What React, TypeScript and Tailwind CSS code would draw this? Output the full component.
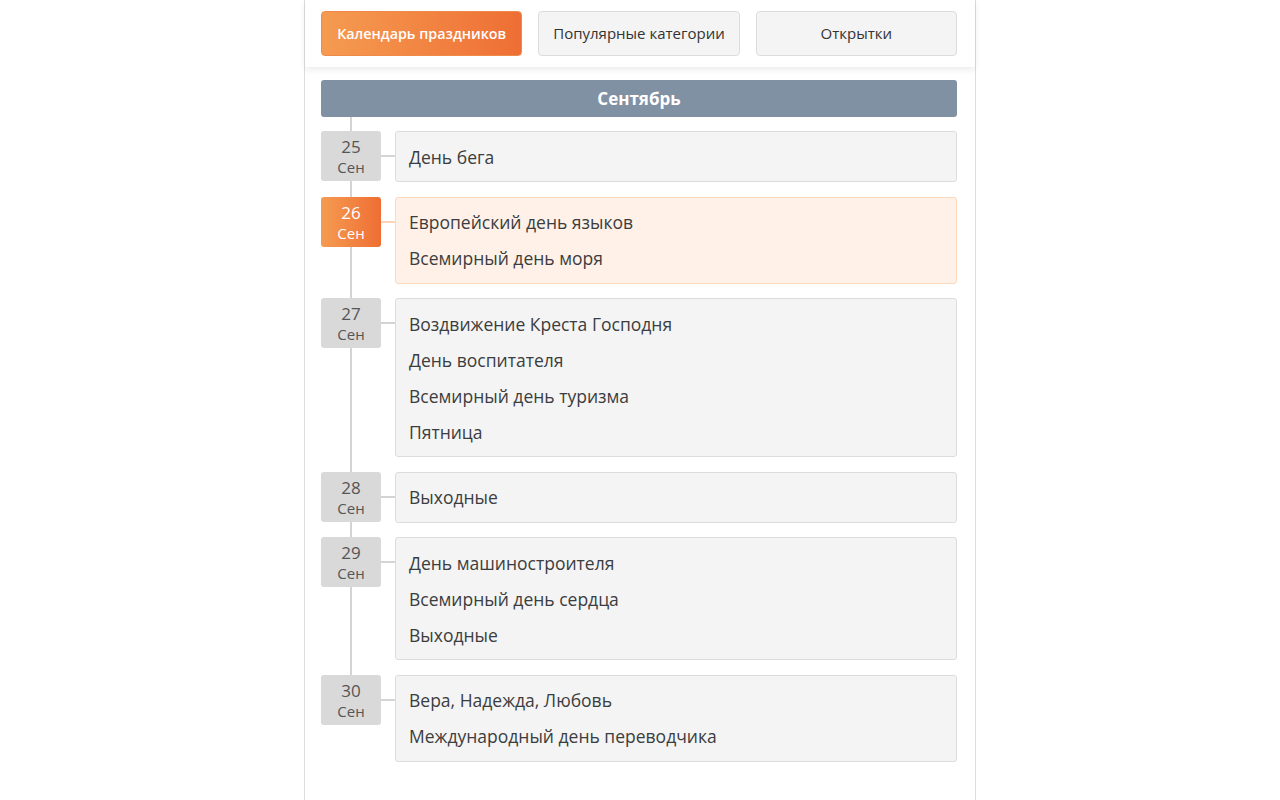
import React from "react";

type Day = {
  day: string;
  items: string[];
  today?: boolean;
};

const days: Day[] = [
  { day: "25", items: ["День бега"] },
  { day: "26", items: ["Европейский день языков", "Всемирный день моря"], today: true },
  {
    day: "27",
    items: ["Воздвижение Креста Господня", "День воспитателя", "Всемирный день туризма", "Пятница"],
  },
  { day: "28", items: ["Выходные"] },
  { day: "29", items: ["День машиностроителя", "Всемирный день сердца", "Выходные"] },
  { day: "30", items: ["Вера, Надежда, Любовь", "Международный день переводчика"] },
];

const tabs = ["Календарь праздников", "Популярные категории", "Открытки"];

export default function App() {
  return (
    <div
      className="min-h-screen bg-white"
      style={{ fontFamily: '"Open Sans", "Noto Sans", sans-serif' }}
    >
      <div className="w-[672px] mx-auto min-h-screen border-x border-[#dcdcdc] bg-white">
        {/* Tabs */}
        <div className="grid grid-cols-3 gap-4 pl-4 pr-[18px] py-[11px] shadow-[0_3px_6px_rgba(0,0,0,0.08)]">
          {tabs.map((t, i) =>
            i === 0 ? (
              <div
                key={t}
                className="h-[45px] rounded-[4px] border border-[#f08a4a] bg-linear-to-r from-[#f59b51] to-[#ee6e34] flex items-center justify-center text-[14.3px] font-semibold text-white"
              >
                {t}
              </div>
            ) : (
              <div
                key={t}
                className="h-[45px] rounded-[4px] border border-[#dcdcdc] bg-[#f4f4f4] flex items-center justify-center text-[15px] text-[#333]"
              >
                {t}
              </div>
            )
          )}
        </div>

        <div className="pl-4 pr-[18px] pt-[13px] pb-8">
          <div className="h-[37px] rounded-[3px] bg-[#8191a4] flex items-center justify-center text-[17px] font-bold text-white">
            Сентябрь
          </div>

          {/* Timeline */}
          <div className="relative flex flex-col gap-[14.5px] pt-[14px]">
            <div className="absolute left-[29px] top-0 bottom-[87px] w-[2px] bg-[#d4d4d4]" />
            {days.map((d) => (
              <div key={d.day} className="relative flex items-start">
                <div
                  className={
                    d.today
                      ? "w-[60px] h-[50px] shrink-0 rounded-[3px] bg-linear-to-r from-[#f59b51] to-[#ee6e34] text-white flex flex-col items-center pt-[5px]"
                      : "w-[60px] h-[50px] shrink-0 rounded-[3px] bg-[#d9d9d9] text-[#555] flex flex-col items-center pt-[5px]"
                  }
                >
                  <span className="text-[17px] leading-[21px]">{d.day}</span>
                  <span className="text-[15px] leading-[21px]">Сен</span>
                </div>
                <div
                  className={
                    d.today
                      ? "w-[14px] h-[2px] mt-[24px] shrink-0 bg-[#fcd3b4]"
                      : "w-[14px] h-[2px] mt-[24px] shrink-0 bg-[#d4d4d4]"
                  }
                />
                <div
                  className={
                    d.today
                      ? "flex-1 rounded-[3px] border border-[#fcd9be] bg-[#fff1e7] px-[13px] py-[6.5px]"
                      : "flex-1 rounded-[3px] border border-[#dcdcdc] bg-[#f4f4f4] px-[13px] py-[6.5px]"
                  }
                >
                  {d.items.map((it) => (
                    <div key={it} className="text-[17.5px] leading-[36px] text-[#3b3d40]">
                      {it}
                    </div>
                  ))}
                </div>
              </div>
            ))}
          </div>
        </div>
      </div>
    </div>
  );
}
